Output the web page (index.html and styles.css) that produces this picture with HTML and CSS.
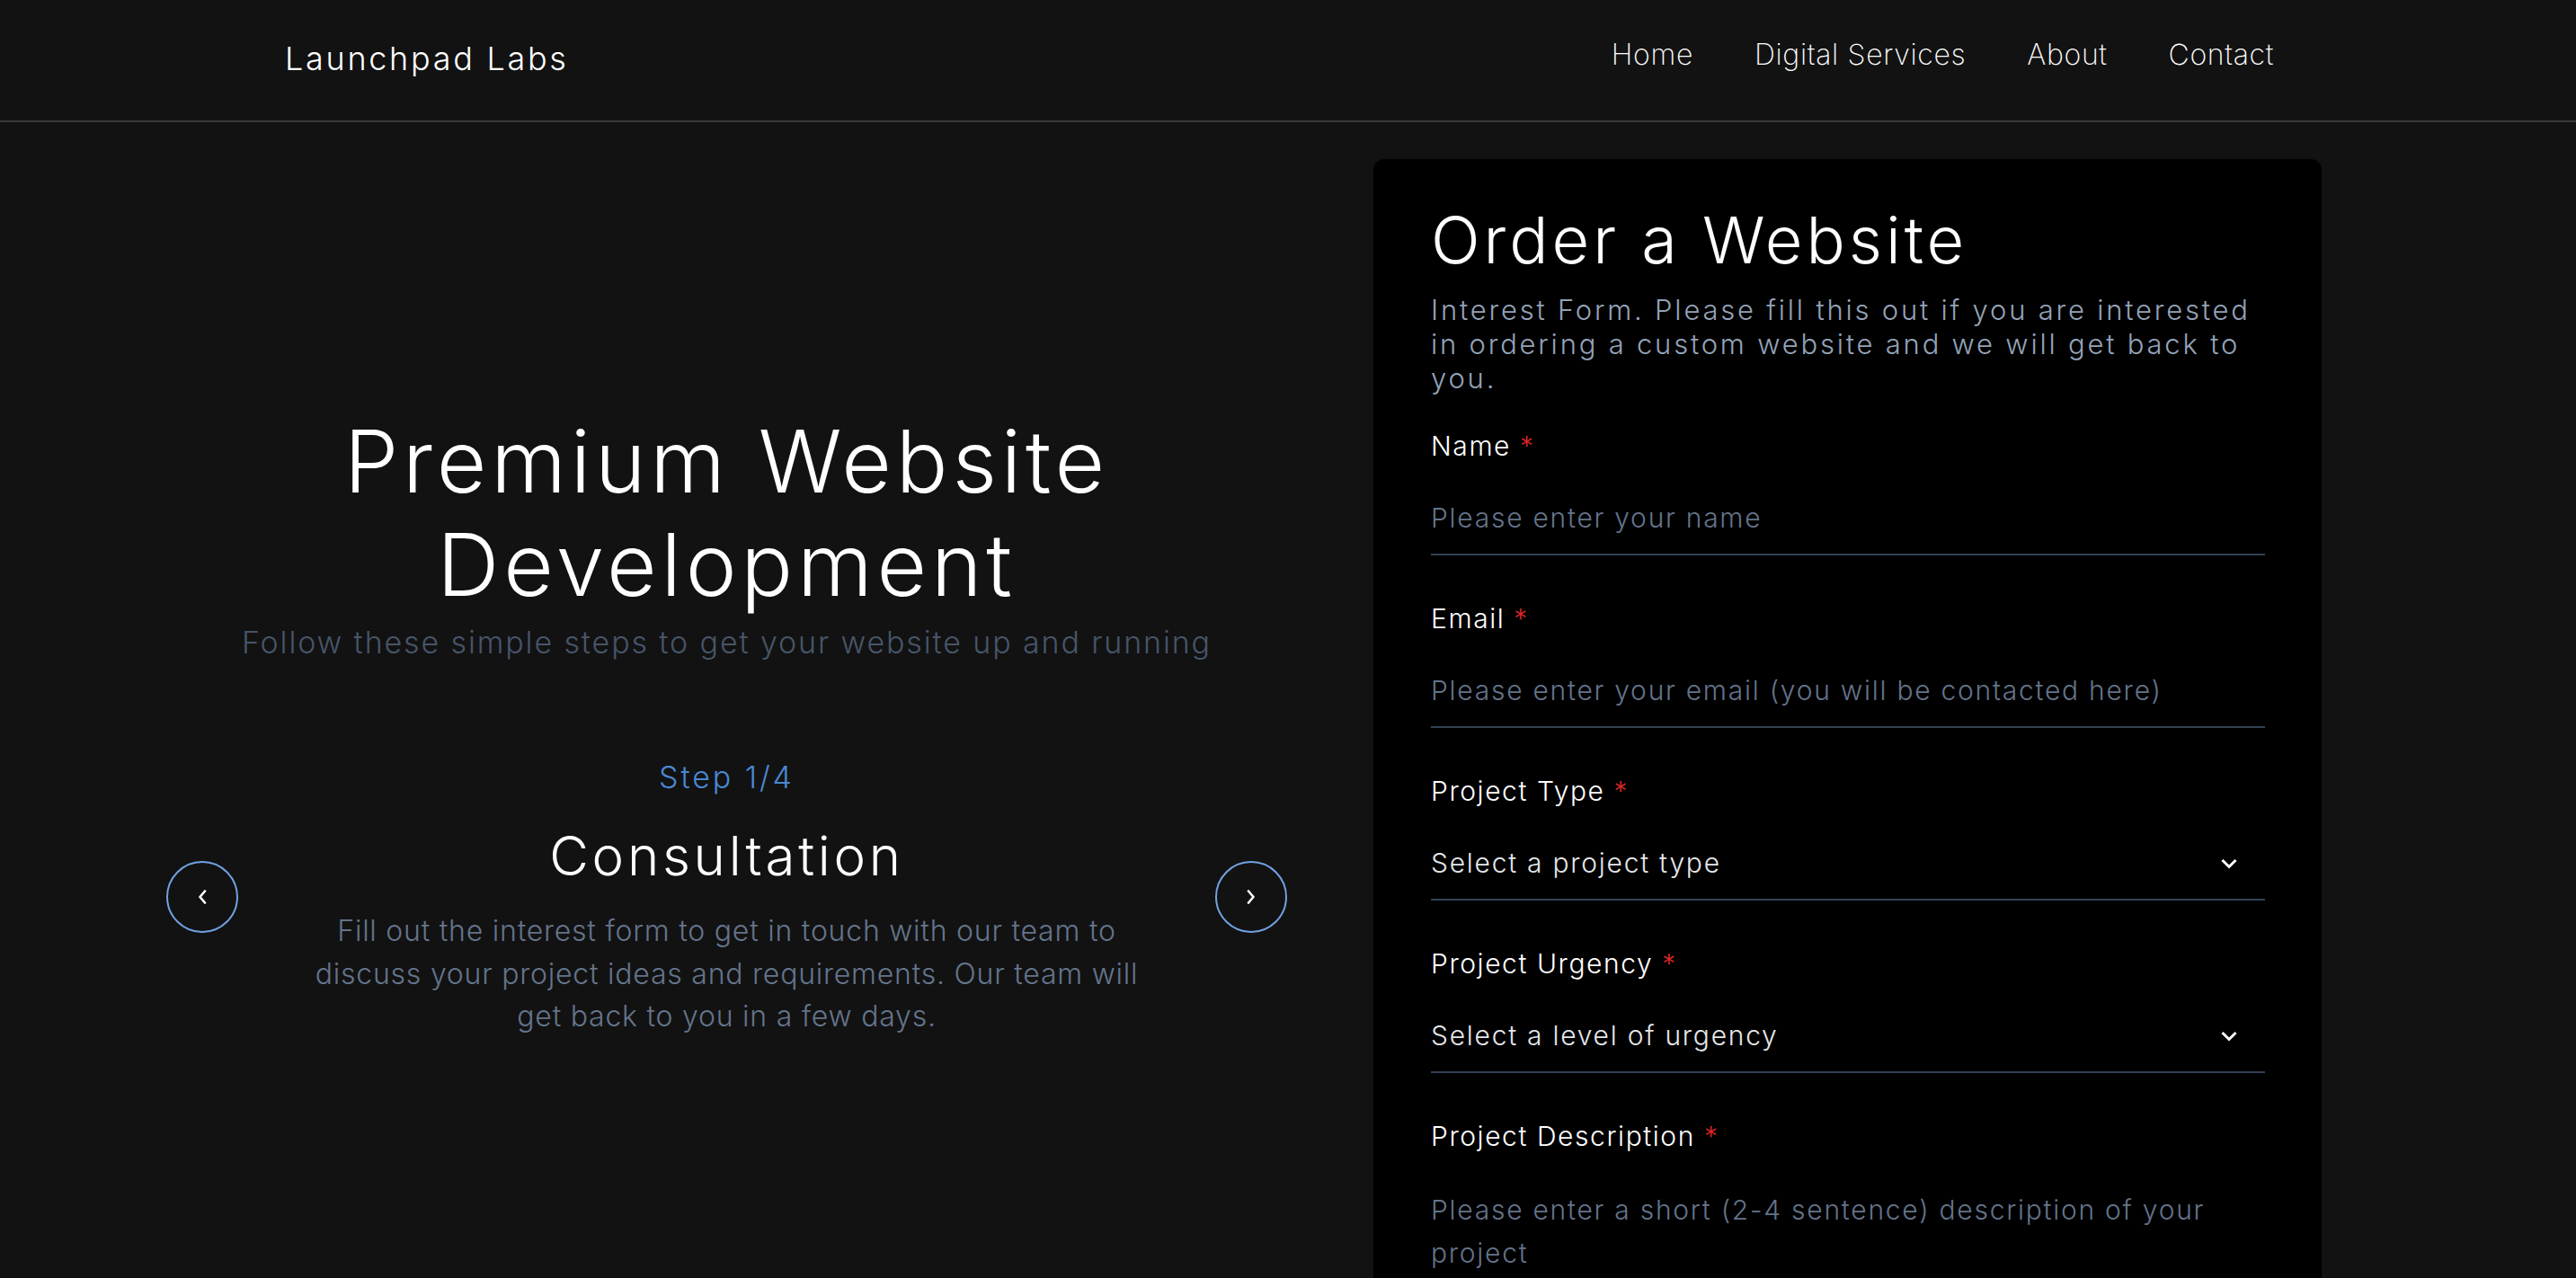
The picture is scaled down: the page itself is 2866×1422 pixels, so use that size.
FILE: index.html
```html
<!DOCTYPE html>
<html lang="en">
<head>
<meta charset="utf-8">
<title>Launchpad Labs</title>
<link rel="stylesheet" href="styles.css">
</head>
<body>
<header class="site-header">
  <a class="logo" href="#">Launchpad Labs</a>
  <nav class="nav">
    <a href="#">Home</a>
    <a href="#">Digital Services</a>
    <a href="#">About</a>
    <a href="#">Contact</a>
  </nav>
</header>
<main class="main">
  <section class="hero">
    <h1 class="hero-title">Premium Website<br>Development</h1>
    <p class="hero-sub">Follow these simple steps to get your website up and running</p>
    <div class="carousel">
      <button class="circle-btn" aria-label="Previous">
        <svg width="10" height="16" viewBox="0 0 10 16"><path d="M8 1.5 L2.5 8 L8 14.5" fill="none" stroke="#fff" stroke-width="2.6" stroke-linecap="round" stroke-linejoin="round"/></svg>
      </button>
      <div class="step">
        <div class="step-num">Step 1/4</div>
        <h2 class="step-title">Consultation</h2>
        <p class="step-text">Fill out the interest form to get in touch with our team to discuss your project ideas and requirements. Our team will get back to you in a few days.</p>
      </div>
      <button class="circle-btn" aria-label="Next">
        <svg width="10" height="16" viewBox="0 0 10 16"><path d="M2 1.5 L7.5 8 L2 14.5" fill="none" stroke="#fff" stroke-width="2.6" stroke-linecap="round" stroke-linejoin="round"/></svg>
      </button>
    </div>
  </section>
  <section class="card">
    <h2 class="card-title">Order a Website</h2>
    <p class="card-sub">Interest Form. Please fill this out if you are interested in ordering a custom website and we will get back to you.</p>
    <form class="form">
      <div class="field">
        <label class="label">Name <span class="req">*</span></label>
        <input class="input" type="text" placeholder="Please enter your name">
      </div>
      <div class="field">
        <label class="label">Email <span class="req">*</span></label>
        <input class="input" type="email" placeholder="Please enter your email (you will be contacted here)">
      </div>
      <div class="field">
        <label class="label">Project Type <span class="req">*</span></label>
        <div class="select-wrap">
          <select class="input select"><option>Select a project type</option></select>
          <svg class="chev" width="20" height="12" viewBox="0 0 20 12"><path d="M2.5 2 L10 9.5 L17.5 2" fill="none" stroke="#fff" stroke-width="3"/></svg>
        </div>
      </div>
      <div class="field">
        <label class="label">Project Urgency <span class="req">*</span></label>
        <div class="select-wrap">
          <select class="input select"><option>Select a level of urgency</option></select>
          <svg class="chev" width="20" height="12" viewBox="0 0 20 12"><path d="M2.5 2 L10 9.5 L17.5 2" fill="none" stroke="#fff" stroke-width="3"/></svg>
        </div>
      </div>
      <div class="field">
        <label class="label">Project Description <span class="req">*</span></label>
        <textarea class="input textarea" rows="3" placeholder="Please enter a short (2-4 sentence) description of your project"></textarea>
      </div>
    </form>
  </section>
</main>
</body>
</html>
```
FILE: styles.css
```css
* { box-sizing: border-box; }
html, body { margin: 0; padding: 0; }
body {
  background: #121212;
  color: #fff;
  font-family: Inter, "Noto Sans", sans-serif;
  font-weight: 300;
  overflow: hidden;
}
a { color: inherit; text-decoration: none; }

.site-header {
  height: 136px;
  border-bottom: 2px solid #38383d;
  display: flex;
  align-items: center;
  justify-content: space-between;
  padding: 0 336px 13px 317px;
}
.logo {
  font-size: 36px;
  font-weight: 300;
  letter-spacing: 0.075em;
  padding-top: 9px;
}
.nav { display: flex; gap: 68px; }
.nav a { font-size: 32px; font-weight: 200; letter-spacing: 0.02em; }

.main {
  display: flex;
  align-items: flex-start;
  gap: 96px;
  padding: 41px 0 0 185px;
}
.hero {
  width: 1247px;
  text-align: center;
  padding-top: 279px;
}
.hero-title {
  margin: 0;
  font-size: 96px;
  line-height: 115px;
  font-weight: 300;
  letter-spacing: 0.05em;
}
.hero-sub {
  margin: 5px 0 0;
  font-size: 34px;
  line-height: 48px;
  color: #475569;
  letter-spacing: 0.055em;
}
.carousel {
  margin-top: 102px;
  display: flex;
  align-items: center;
  justify-content: space-between;
}
.circle-btn {
  width: 80px;
  height: 80px;
  border-radius: 50%;
  border: 2px solid #70a2e2;
  background: transparent;
  display: flex;
  align-items: center;
  justify-content: center;
  padding: 0;
}
.step { width: 960px; }
.step-num {
  font-size: 34px;
  line-height: 48px;
  color: #4a88d2;
  letter-spacing: 0.085em;
}
.step-title {
  margin: 27px 0 0;
  font-size: 60px;
  line-height: 72px;
  font-weight: 300;
  letter-spacing: 0.062em;
}
.step-text {
  margin: 24px auto 0;
  width: 930px;
  font-size: 32px;
  line-height: 47.5px;
  color: #64748b;
  letter-spacing: 0.024em;
}

.card {
  width: 1055px;
  flex: none;
  background: #000;
  border-radius: 12px;
  padding: 47px 63px 80px 64px;
}
.card-title {
  margin: 0;
  font-size: 72px;
  line-height: 86px;
  font-weight: 300;
  letter-spacing: 0.055em;
}
.card-sub {
  margin: 16px 0 0;
  font-size: 31px;
  line-height: 38px;
  color: #94a3b8;
  letter-spacing: 0.09em;
}
.form { margin-top: 34px; }
.field { margin-bottom: 48px; }
.label {
  display: block;
  font-size: 30px;
  line-height: 44px;
  margin-bottom: 18px;
  letter-spacing: 0.052em;
}
.req { color: #dc2626; }
.input {
  display: block;
  width: 100%;
  font-family: inherit;
  font-weight: 300;
  font-size: 30px;
  line-height: 44px;
  letter-spacing: 0.058em;
  color: #e5e7eb;
  background: transparent;
  border: 0;
  border-bottom: 2px solid #334155;
  padding: 18px 0;
  outline: none;
  border-radius: 0;
}
.input::placeholder { color: #64748b; opacity: 1; }
.select-wrap { position: relative; }
.select {
  appearance: none;
  -webkit-appearance: none;
  height: 82px;
}
.chev {
  position: absolute;
  right: 30px;
  top: 35px;
  pointer-events: none;
}
.textarea {
  resize: none;
  line-height: 48px;
  height: 180px;
}
```
